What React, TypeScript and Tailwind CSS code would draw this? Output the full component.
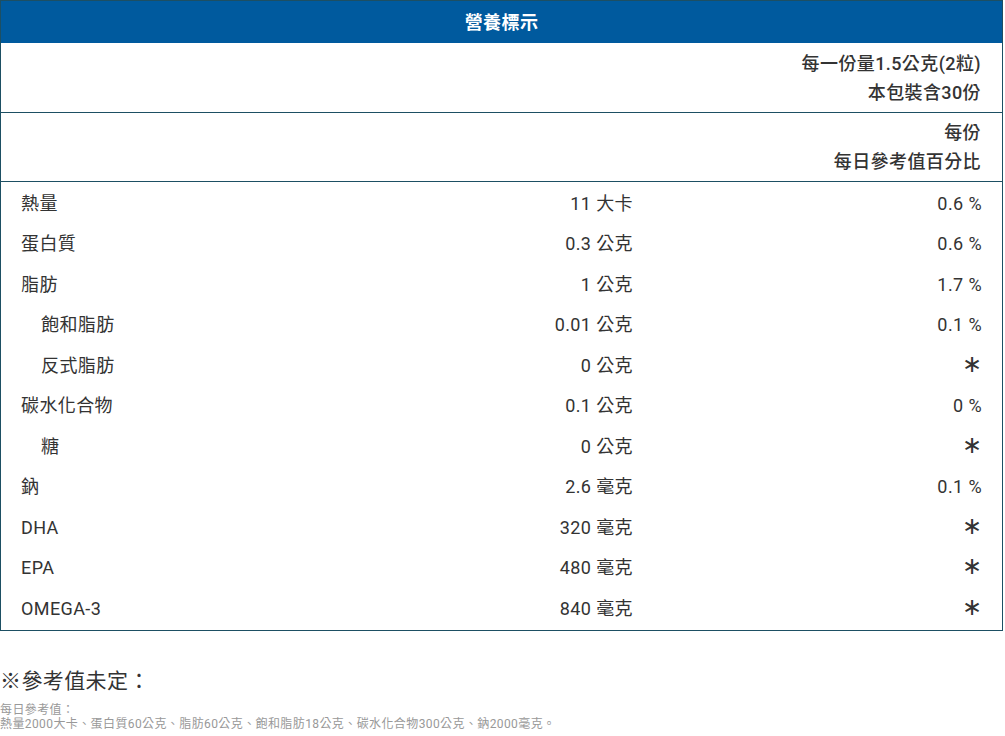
const rows: [string, string, string, boolean][] = [
  ['熱量', '11 大卡', '0.6 %', false],
  ['蛋白質', '0.3 公克', '0.6 %', false],
  ['脂肪', '1 公克', '1.7 %', false],
  ['飽和脂肪', '0.01 公克', '0.1 %', true],
  ['反式脂肪', '0 公克', '*', true],
  ['碳水化合物', '0.1 公克', '0 %', false],
  ['糖', '0 公克', '*', true],
  ['鈉', '2.6 毫克', '0.1 %', false],
  ['DHA', '320 毫克', '*', false],
  ['EPA', '480 毫克', '*', false],
  ['OMEGA-3', '840 毫克', '*', false],
];

export default function App() {
  return (
    <div className="w-[1005px] h-[736px] bg-white text-[#333] tracking-wide" style={{ fontFamily: 'Roboto, "Noto Sans CJK TC", sans-serif' }}>
      <div className="w-[1003px] border border-[#1d4f63]">
        <div className="h-[42px] bg-[#005a9e] text-white text-[18px] font-bold flex items-center justify-center">營養標示</div>
        <div className="h-[70px] border-b border-[#1d4f63] flex flex-col items-end justify-center pr-[21px] text-[18px] font-medium leading-[29px]">
          <div>每一份量1.5公克(2粒)</div>
          <div>本包裝含30份</div>
        </div>
        <div className="h-[69px] border-b border-[#1d4f63] flex flex-col items-end justify-center pr-[21px] text-[18px] font-medium leading-[29px]">
          <div>每份</div>
          <div>每日參考值百分比</div>
        </div>
        <div className="py-[1px]">
          {rows.map(([n, v, p, ind]) => (
            <div key={n} className="h-[40.5px] flex items-center text-[18px]">
              <div className={`${ind ? 'pl-[40px]' : 'pl-[20px]'} w-[632px] flex`}>
                <span className="flex-1">{n}</span>
                <span>{v}</span>
              </div>
              <div className="flex-1 text-right pr-[20px]">{p === '*' ? <span className="text-[24px] leading-none">∗</span> : p}</div>
            </div>
          ))}
        </div>
      </div>
      <div className="mt-[36px] text-[21px] leading-[28px]">※參考值未定：</div>
      <div className="mt-[8px] text-[12px] leading-[14px] text-[#999]">
        <div>每日參考值：</div>
        <div>熱量2000大卡、蛋白質60公克、脂肪60公克、飽和脂肪18公克、碳水化合物300公克、鈉2000毫克。</div>
      </div>
    </div>
  );
}
